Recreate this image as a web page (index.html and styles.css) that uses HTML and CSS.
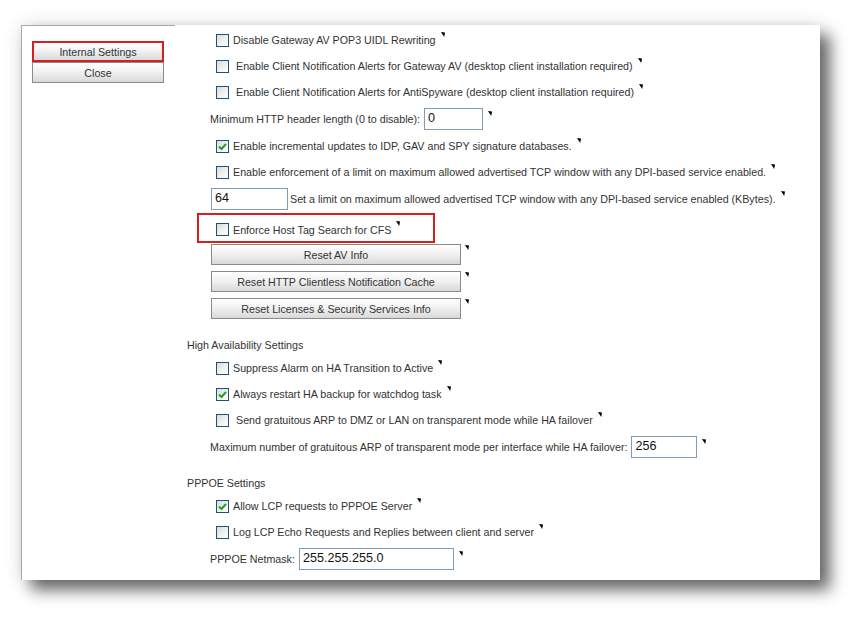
FILE: index.html
```html
<!DOCTYPE html>
<html>
<head>
<meta charset="utf-8">
<link rel="stylesheet" href="styles.css">
</head>
<body>
<div class="card">
  <div class="side">
    <button class="btn side-btn marked">Internal Settings</button>
    <button class="btn side-btn">Close</button>
  </div>
  <div class="main">
    <div class="row cb-row"><span class="cb"></span><span class="lbl">Disable Gateway AV POP3 UIDL Rewriting</span><svg class="tip" width="4" height="5" viewBox="0 0 4 5"><polygon points="0,0 4,0.6 3.2,5"/></svg></div>
    <div class="row cb-row"><span class="cb"></span><span class="lbl sp">Enable Client Notification Alerts for Gateway AV (desktop client installation required)</span><svg class="tip" width="4" height="5" viewBox="0 0 4 5"><polygon points="0,0 4,0.6 3.2,5"/></svg></div>
    <div class="row cb-row"><span class="cb"></span><span class="lbl sp">Enable Client Notification Alerts for AntiSpyware (desktop client installation required)</span><svg class="tip" width="4" height="5" viewBox="0 0 4 5"><polygon points="0,0 4,0.6 3.2,5"/></svg></div>
    <div class="row in-row"><span class="lbl">Minimum HTTP header length (0 to disable):</span><span class="field w58">0</span><svg class="tip" width="4" height="5" viewBox="0 0 4 5"><polygon points="0,0 4,0.6 3.2,5"/></svg></div>
    <div class="row cb-row"><span class="cb checked"><svg width="11" height="11" viewBox="0 0 11 11"><polyline points="2,5.5 4.5,8 9,3" fill="none" stroke="#21a121" stroke-width="2"/></svg></span><span class="lbl">Enable incremental updates to IDP, GAV and SPY signature databases.</span><svg class="tip" width="4" height="5" viewBox="0 0 4 5"><polygon points="0,0 4,0.6 3.2,5"/></svg></div>
    <div class="row cb-row"><span class="cb"></span><span class="lbl">Enable enforcement of a limit on maximum allowed advertised TCP window with any DPI-based service enabled.</span><svg class="tip" width="4" height="5" viewBox="0 0 4 5"><polygon points="0,0 4,0.6 3.2,5"/></svg></div>
    <div class="row in-row lead"><span class="field w77">64</span><span class="lbl">Set a limit on maximum allowed advertised TCP window with any DPI-based service enabled (KBytes).</span><svg class="tip" width="4" height="5" viewBox="0 0 4 5"><polygon points="0,0 4,0.6 3.2,5"/></svg></div>
    <div class="highlight"><span class="cb"></span><span class="lbl">Enforce Host Tag Search for CFS</span><svg class="tip" width="4" height="5" viewBox="0 0 4 5"><polygon points="0,0 4,0.6 3.2,5"/></svg></div>
    <div class="btn-group">
      <div class="btn-row"><button class="btn wide-btn">Reset AV Info</button><svg class="tip-top" width="4" height="5" viewBox="0 0 4 5"><polygon points="0,0 4,0.6 3.2,5"/></svg></div>
      <div class="btn-row"><button class="btn wide-btn">Reset HTTP Clientless Notification Cache</button><svg class="tip-top" width="4" height="5" viewBox="0 0 4 5"><polygon points="0,0 4,0.6 3.2,5"/></svg></div>
      <div class="btn-row"><button class="btn wide-btn">Reset Licenses &amp; Security Services Info</button><svg class="tip-top" width="4" height="5" viewBox="0 0 4 5"><polygon points="0,0 4,0.6 3.2,5"/></svg></div>
    </div>
    <div class="section-title first">High Availability Settings</div>
    <div class="row cb-row"><span class="cb"></span><span class="lbl">Suppress Alarm on HA Transition to Active</span><svg class="tip" width="4" height="5" viewBox="0 0 4 5"><polygon points="0,0 4,0.6 3.2,5"/></svg></div>
    <div class="row cb-row"><span class="cb checked"><svg width="11" height="11" viewBox="0 0 11 11"><polyline points="2,5.5 4.5,8 9,3" fill="none" stroke="#21a121" stroke-width="2"/></svg></span><span class="lbl">Always restart HA backup for watchdog task</span><svg class="tip" width="4" height="5" viewBox="0 0 4 5"><polygon points="0,0 4,0.6 3.2,5"/></svg></div>
    <div class="row cb-row"><span class="cb"></span><span class="lbl sp">Send gratuitous ARP to DMZ or LAN on transparent mode while HA failover</span><svg class="tip" width="4" height="5" viewBox="0 0 4 5"><polygon points="0,0 4,0.6 3.2,5"/></svg></div>
    <div class="row in-row"><span class="lbl">Maximum number of gratuitous ARP of transparent mode per interface while HA failover:</span><span class="field w66">256</span><svg class="tip" width="4" height="5" viewBox="0 0 4 5"><polygon points="0,0 4,0.6 3.2,5"/></svg></div>
    <div class="section-title">PPPOE Settings</div>
    <div class="row cb-row"><span class="cb checked"><svg width="11" height="11" viewBox="0 0 11 11"><polyline points="2,5.5 4.5,8 9,3" fill="none" stroke="#21a121" stroke-width="2"/></svg></span><span class="lbl">Allow LCP requests to PPPOE Server</span><svg class="tip" width="4" height="5" viewBox="0 0 4 5"><polygon points="0,0 4,0.6 3.2,5"/></svg></div>
    <div class="row cb-row"><span class="cb"></span><span class="lbl">Log LCP Echo Requests and Replies between client and server</span><svg class="tip" width="4" height="5" viewBox="0 0 4 5"><polygon points="0,0 4,0.6 3.2,5"/></svg></div>
    <div class="row in-row"><span class="lbl">PPPOE Netmask:</span><span class="field w155">255.255.255.0</span><svg class="tip" width="4" height="5" viewBox="0 0 4 5"><polygon points="0,0 4,0.6 3.2,5"/></svg></div>
  </div>
</div>
</body>
</html>
```
FILE: styles.css
```css
html, body {
  margin: 0;
  padding: 0;
  background: #ffffff;
}
body {
  width: 862px;
  height: 622px;
  overflow: hidden;
  font-family: "Liberation Sans", Arial, sans-serif;
  font-size: 10.7px;
  color: #333333;
}
.card {
  box-sizing: border-box;
  margin: 25px 0 0 21px;
  width: 799px;
  height: 555px;
  background: #ffffff;
  border-left: 1px solid #a8a8a8;
  display: flex;
  box-shadow: 10px 10px 15px rgba(0, 0, 0, 0.58), 0 0 18px rgba(0, 0, 0, 0.12);
}
.side {
  width: 143px;
  flex: none;
  border-top: 1px solid #a8a8a8;
  height: 0;
  padding: 15px 0 0 10px;
  box-sizing: content-box;
  display: flex;
  flex-direction: column;
  align-items: flex-start;
}
.btn {
  font-family: "Liberation Sans", Arial, sans-serif;
  font-size: 10.7px;
  color: #333333;
  border: 1px solid #8a8a8a;
  background: linear-gradient(#ffffff, #f2f2f2 45%, #d9d9d9);
  padding: 0;
  margin: 0;
  box-sizing: border-box;
  flex: none;
}
.side-btn {
  width: 132px;
  height: 21px;
}
.side-btn.marked {
  border: 2px solid #d42020;
}
.main {
  flex: 1;
  padding: 2px 0 0 12px;
}
.row {
  display: flex;
  align-items: center;
  white-space: nowrap;
}
.cb-row {
  height: 26px;
  padding-left: 29px;
}
.in-row {
  height: 28px;
  padding-left: 23px;
}
.in-row.lead {
  padding-left: 24px;
}
.cb {
  box-sizing: border-box;
  width: 13px;
  height: 13px;
  border: 1px solid #1c5180;
  background: linear-gradient(135deg, #dcdcd7, #f6f6f3 70%, #ffffff);
  margin-right: 4px;
  flex: none;
  display: flex;
  align-items: center;
  justify-content: center;
}
.lbl.sp {
  padding-left: 3px;
}
.tip {
  flex: none;
  fill: #000000;
  margin: 0 0 12px 5px;
}
.tip-top {
  flex: none;
  fill: #000000;
  margin: 1px 0 0 4px;
  align-self: flex-start;
}
.field {
  box-sizing: border-box;
  height: 22px;
  border: 1px solid #7f9db9;
  font-family: "Liberation Sans", Arial, sans-serif;
  font-size: 12.6px;
  color: #111111;
  padding: 0 0 0 3px;
  line-height: 19px;
  margin-left: 4px;
  flex: none;
}
.lead .field {
  margin: 0 2px 0 0;
}
.w58 { width: 59px; }
.w77 { width: 77px; }
.w66 { width: 66px; }
.w155 { width: 155px; }
.highlight {
  box-sizing: border-box;
  margin-left: 10px;
  width: 238px;
  height: 30px;
  border: 2px solid #d42020;
  padding: 3px 0 0 17px;
  display: flex;
  align-items: center;
  white-space: nowrap;
}
.btn-group {
  padding: 1px 0 0 24px;
  display: flex;
  flex-direction: column;
  gap: 6px;
}
.btn-row {
  display: flex;
}
.wide-btn {
  width: 250px;
  height: 21px;
}
.section-title {
  height: 20px;
  line-height: 20px;
  margin-top: 12px;
}
.section-title.first {
  margin-top: 16px;
}
```
